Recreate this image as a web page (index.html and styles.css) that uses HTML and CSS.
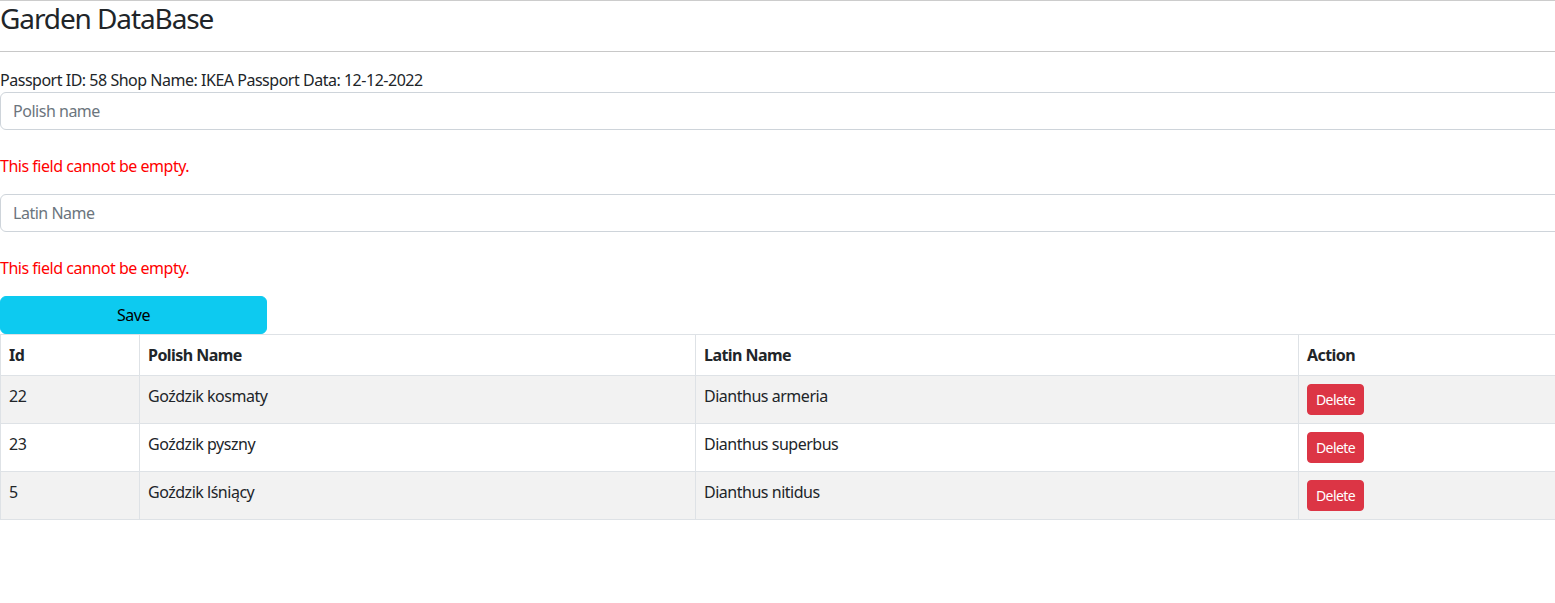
FILE: index.html
```html
<!DOCTYPE html>
<html lang="pl">
<head>
<meta charset="utf-8">
<title>Garden DataBase</title>
<link rel="stylesheet" href="styles.css">
</head>
<body>
<div class="page">
  <header class="header">
    <h1 class="title">Garden DataBase</h1>
  </header>
  <hr class="divider">
  <div class="passport">Passport ID: 58 Shop Name: IKEA Passport Data: 12-12-2022</div>
  <form class="form">
    <input class="field" type="text" placeholder="Polish name">
    <p class="error">This field cannot be empty.</p>
    <input class="field" type="text" placeholder="Latin Name">
    <p class="error">This field cannot be empty.</p>
    <button class="save" type="button">Save</button>
  </form>
  <table class="plants">
    <colgroup>
      <col class="c-id"><col class="c-pl"><col class="c-la"><col class="c-act">
    </colgroup>
    <thead>
      <tr><th>Id</th><th>Polish Name</th><th>Latin Name</th><th>Action</th></tr>
    </thead>
    <tbody>
      <tr><td>22</td><td>Goździk kosmaty</td><td>Dianthus armeria</td><td><button class="del" type="button">Delete</button></td></tr>
      <tr><td>23</td><td>Goździk pyszny</td><td>Dianthus superbus</td><td><button class="del" type="button">Delete</button></td></tr>
      <tr><td>5</td><td>Goździk lśniący</td><td>Dianthus nitidus</td><td><button class="del" type="button">Delete</button></td></tr>
    </tbody>
  </table>
</div>
</body>
</html>
```

FILE: styles.css
```css
html, body {
  margin: 0;
  padding: 0;
  overflow: hidden;
  background: #fff;
}
body {
  font-family: "Noto Sans", "Open Sans", sans-serif;
  font-size: 16px;
  line-height: 1.5;
  letter-spacing: -0.48px;
  color: #212529;
}
.page {
  width: 1600px;
}
.header {
  border-top: 1px solid #cccccc;
}
.title {
  margin: 0 0 16px;
  font-size: 28px;
  font-weight: 400;
  line-height: 34px;
  letter-spacing: -1.1px;
}
.divider {
  margin: 0 0 16px;
  border: 0;
  border-top: 1px solid #c8c8c8;
}
.passport {
  height: 24px;
}
.form {
  display: flex;
  flex-direction: column;
  align-items: flex-start;
  margin: 0;
}
.field {
  box-sizing: border-box;
  width: 100%;
  height: 38px;
  padding: 6px 12px;
  font: inherit;
  letter-spacing: inherit;
  color: #212529;
  border: 1px solid #ced4da;
  border-radius: 6px;
  background: #fff;
}
.field::placeholder {
  color: #6c757d;
}
.error {
  margin: 24px 0 16px;
  color: #ff0000;
}
.save {
  width: 267px;
  height: 38px;
  padding: 6px 12px;
  font: inherit;
  letter-spacing: inherit;
  color: #000;
  background: #0dcaf0;
  border: 1px solid #0dcaf0;
  border-radius: 6px;
}
.plants {
  width: 1600px;
  border-collapse: collapse;
  table-layout: fixed;
}
.c-id { width: 139px; }
.c-pl { width: 556px; }
.c-la { width: 603px; }
.plants th, .plants td {
  border: 1px solid #dee2e6;
  padding: 8px;
  text-align: left;
  vertical-align: top;
}
.plants th {
  font-weight: 700;
  letter-spacing: -0.55px;
}
.plants tbody tr:nth-child(odd) {
  background: #f2f2f2;
}
.del {
  padding: 4px 8px;
  font: inherit;
  font-size: 14px;
  line-height: 21px;
  letter-spacing: -0.6px;
  color: #fff;
  background: #dc3545;
  border: 1px solid #dc3545;
  border-radius: 4px;
}
```
